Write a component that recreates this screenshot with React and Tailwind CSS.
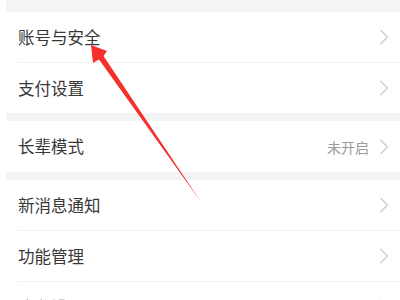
import React from "react";

function Chevron() {
  return (
    <svg width="10" height="16" viewBox="0 0 10 16" className="shrink-0">
      <path d="M1.5 1 L8.5 8 L1.5 15" fill="none" stroke="#cbcbcb" strokeWidth="1.3" />
    </svg>
  );
}

function Row({ label, value, h = "h-[50px]" }) {
  return (
    <div className={`flex items-center justify-between pl-[12px] pr-[11px] ${h}`}>
      <span className="text-[16.5px] text-[#383838] leading-none">{label}</span>
      <div className="flex items-center gap-[10px]">
        {value && <span className="text-[14px] text-[#9a9a9a] leading-none">{value}</span>}
        <Chevron />
      </div>
    </div>
  );
}

function Divider() {
  return <div className="ml-[12px] h-px bg-[#efefef]" />;
}

export default function App() {
  return (
    <div
      className="relative w-[400px] h-[300px] overflow-hidden bg-white pl-[6px]"
      style={{ fontFamily: '"Noto Sans CJK SC", "Noto Sans", sans-serif' }}
    >
      <div className="h-[12px] bg-[#f4f4f4]" />
      <Row label="账号与安全" />
      <Divider />
      <Row label="支付设置" />
      <div className="h-[8px] bg-[#f4f4f4]" />
      <Row label="长辈模式" value="未开启" h="h-[51px]" />
      <div className="h-[8px] bg-[#f4f4f4]" />
      <Row label="新消息通知" />
      <Divider />
      <Row label="功能管理" />
      <Divider />
      <Row label="隐私设置" />
      <svg className="absolute inset-0 pointer-events-none" width="400" height="300" viewBox="0 0 400 300">
        <polygon
          points="91,45 107,51 103.5,56 201,202 99,59.5 93,63"
          fill="#f3302c"
        />
      </svg>
    </div>
  );
}
